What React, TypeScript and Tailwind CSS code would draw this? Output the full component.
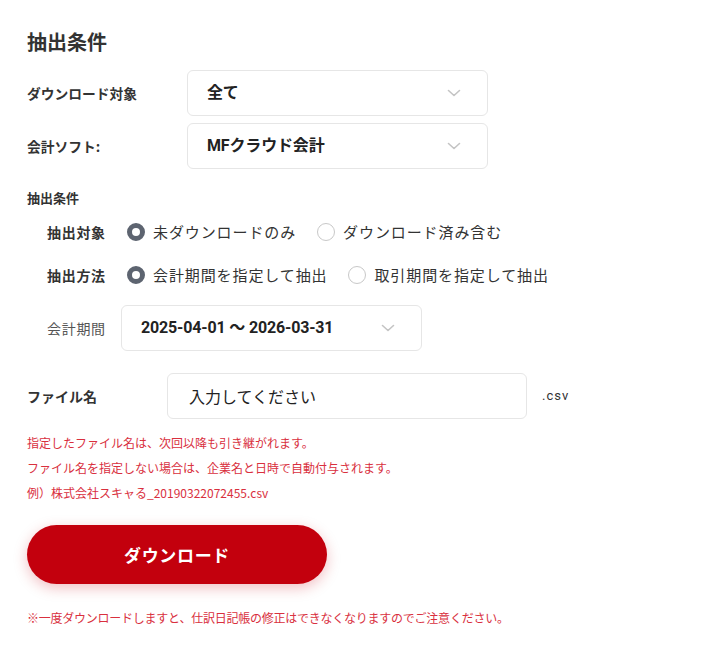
import React, { useState } from 'react';

const font = { fontFamily: '"Noto Sans CJK JP", "Noto Sans", sans-serif' };
const latin = { fontFamily: 'Roboto, "Noto Sans CJK JP", sans-serif' };

function Chevron() {
  return (
    <svg width="14" height="8" viewBox="0 0 14 8" fill="none" className="shrink-0">
      <path d="M1.5 1.5L7 6.5L12.5 1.5" stroke="#c4c4c4" strokeWidth="1.6" strokeLinecap="round" strokeLinejoin="round" />
    </svg>
  );
}

function SelectBox({ value, className }: { value: string; className?: string }) {
  return (
    <div className={`flex items-center justify-between h-[46px] w-[301px] rounded-md border border-[#e6e6e6] bg-white pl-[19px] pr-[26px] ${className ?? ''}`}>
      <span className="text-[16px] font-bold text-[#222] tracking-[-0.01em]" style={latin}>{value}</span>
      <Chevron />
    </div>
  );
}

function Radio({ checked, label, onClick }: { checked: boolean; label: string; onClick: () => void }) {
  return (
    <button type="button" onClick={onClick} className="flex items-center gap-[8px] mr-[21px]">
      {checked ? (
        <span className="w-[18px] h-[18px] rounded-full border-[5px] border-[#5d6470] bg-white" />
      ) : (
        <span className="w-[18px] h-[18px] rounded-full border border-[#c8c8c8] bg-white" />
      )}
      <span className="text-[15px] tracking-[0.06em] text-[#333]">{label}</span>
    </button>
  );
}

export default function App(): React.JSX.Element {
  const [target, setTarget] = useState(0);
  const [method, setMethod] = useState(0);

  return (
    <div className="min-h-screen bg-white px-[27px] pt-[28px] text-[#333]" style={font}>
      <h2 className="text-[20px] font-bold leading-[28px] text-[#333]">抽出条件</h2>

      <div className="mt-[14px] flex items-center">
        <div className="w-[160px] text-[13.75px] font-bold">ダウンロード対象</div>
        <SelectBox value="全て" />
      </div>
      <div className="mt-[7px] flex items-center">
        <div className="w-[160px] text-[13.75px] font-bold">会計ソフト:</div>
        <SelectBox value="MFクラウド会計" />
      </div>

      <div className="mt-[19px] text-[13px] font-bold leading-[20px]">抽出条件</div>

      <div className="pl-[20px]">
        <div className="mt-[12px] flex items-center h-[24px]">
          <div className="w-[80px] text-[14px] font-bold tracking-[0.05em]">抽出対象</div>
          <Radio checked={target === 0} label="未ダウンロードのみ" onClick={() => setTarget(0)} />
          <Radio checked={target === 1} label="ダウンロード済み含む" onClick={() => setTarget(1)} />
        </div>
        <div className="mt-[19px] flex items-center h-[24px]">
          <div className="w-[80px] text-[14px] font-bold tracking-[0.05em]">抽出方法</div>
          <Radio checked={method === 0} label="会計期間を指定して抽出" onClick={() => setMethod(0)} />
          <Radio checked={method === 1} label="取引期間を指定して抽出" onClick={() => setMethod(1)} />
        </div>
        <div className="mt-[18px] flex items-center">
          <div className="w-[74px] text-[14px] text-[#555] tracking-[0.05em]">会計期間</div>
          <SelectBox value="2025-04-01 ～ 2026-03-31" />
        </div>
      </div>

      <div className="mt-[22px] flex items-center">
        <div className="w-[140px] text-[14px] font-bold">ファイル名</div>
        <input
          placeholder="入力してください"
          className="h-[46px] w-[360px] rounded-md border border-[#e6e6e6] bg-white px-[21px] text-[16px] text-[#222] placeholder:text-[#222] outline-none"
        />
        <span className="ml-[15px] text-[13px] tracking-[0.08em] text-[#333]" style={latin}>.csv</span>
      </div>

      <div className="mt-[11px] text-[12px] leading-[25px] text-[#d9303e]">
        <p>指定したファイル名は、次回以降も引き継がれます。</p>
        <p>ファイル名を指定しない場合は、企業名と日時で自動付与されます。</p>
        <p>例）株式会社スキャる_20190322072455.csv</p>
      </div>

      <button
        type="button"
        className="mt-[20px] flex h-[59px] w-[300px] items-center justify-center rounded-full bg-[#c3000d] text-[17px] font-bold tracking-[0.04em] text-white shadow-[0_4px_14px_rgba(200,0,20,0.25)]"
      >
        ダウンロード
      </button>

      <p className="mt-[21px] text-[12px] leading-[25px] tracking-[-0.02em] text-[#d9303e]">
        ※一度ダウンロードしますと、仕訳日記帳の修正はできなくなりますのでご注意ください。
      </p>
    </div>
  );
}
